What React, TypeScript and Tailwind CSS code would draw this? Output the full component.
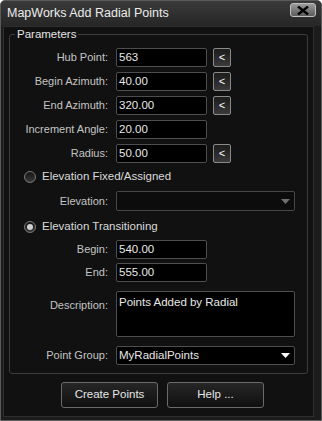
import React from 'react';

const font = "font-['Liberation_Sans',Arial,sans-serif]";

const Label = ({ children }: { children: React.ReactNode }) => (
  <div className="w-[99px] shrink-0 text-right pr-[1px] text-[11px] text-[#c4c4c4] leading-none">{children}</div>
);

const Field = ({ value }: { value: string }) => (
  <div className="w-[91px] h-[19px] ml-[7px] flex items-center pl-[2px] bg-black border border-[#4e4e4e] rounded-[2px] text-[11.5px] text-[#e8e8e8]">
    {value}
  </div>
);

const PickButton = () => (
  <div className="w-[18px] h-[19px] ml-[6px] flex items-center justify-center rounded-[2px] border border-[#8a8a8a] bg-gradient-to-b from-[#1c1c1c] via-[#2a2a2a] to-[#3a3a3a] text-[11px] text-white leading-none">
    &lt;
  </div>
);

const Arrow = ({ color }: { color: string }) => (
  <svg width="9" height="5" viewBox="0 0 9 5" className="mr-[4px]">
    <path d="M0 0 H9 L4.5 5 Z" fill={color} />
  </svg>
);

const Radio = ({ checked, label }: { checked?: boolean; label: string }) => (
  <div className="flex items-center h-[20px] pl-[14px]">
    <div className="w-[12px] h-[12px] rounded-full border border-[#7a7a7a] bg-gradient-to-b from-[#151515] to-[#3a3a3a] flex items-center justify-center">
      {checked && <div className="w-[6px] h-[6px] rounded-full bg-[#d0d0d0]" />}
    </div>
    <span className="ml-[6px] text-[11.5px] text-[#dadada]">{label}</span>
  </div>
);

const FieldRow = ({ label, value, pick, className = '' }: { label: string; value: string; pick?: boolean; className?: string }) => (
  <div className={`flex items-center h-[19px] ${className}`}>
    <Label>{label}</Label>
    <Field value={value} />
    {pick && <PickButton />}
  </div>
);

export default function App() {
  return (
    <div className={`w-[322px] h-[421px] bg-[#1c1c1c] border border-[#5a5a5a] rounded-t-[5px] flex flex-col ${font}`}>
      {/* title bar */}
      <div className="h-[25px] shrink-0 flex items-center justify-between pl-[6px] pr-[5px] bg-gradient-to-b from-[#3a3a3a] to-[#262626] rounded-t-[4px]">
        <span className="text-[12.5px] text-[#ececec]">MapWorks Add Radial Points</span>
        <div className="w-[26px] h-[14px] -mt-[7px] rounded-[3px] border border-[#c0c0c0] bg-gradient-to-b from-[#9a9a9a] to-[#5c5c5c] flex items-center justify-center">
          <svg width="12" height="9" viewBox="0 0 12 9">
            <path d="M1 0.5 L11 8.5 M11 0.5 L1 8.5" stroke="#000" strokeWidth="2.4" />
          </svg>
        </div>
      </div>

      {/* client area */}
      <div className="flex-1 ml-[2px] mr-[7px] mb-[3px] bg-[#111111] border border-[#2e2e2e] flex flex-col px-[5px]">
        <fieldset className="border border-[#3c3c3c] rounded-[3px] pb-[8px]">
          <legend className="ml-[5px] px-[2px] text-[11.5px] leading-[14px] text-[#e4e4e4]">Parameters</legend>
          <FieldRow className="mt-[7px]" label="Hub Point:" value="563" pick />
          <FieldRow className="mt-[5px]" label="Begin Azimuth:" value="40.00" pick />
          <FieldRow className="mt-[5px]" label="End Azimuth:" value="320.00" pick />
          <FieldRow className="mt-[5px]" label="Increment Angle:" value="20.00" />
          <FieldRow className="mt-[5px]" label="Radius:" value="50.00" pick />

          <div className="mt-[4px]">
            <Radio label="Elevation Fixed/Assigned" />
          </div>
          <div className="flex items-center h-[20px] mt-[4px]">
            <Label>Elevation:</Label>
            <div className="w-[179px] h-[20px] ml-[7px] flex items-center justify-end bg-[#0c0c0c] border border-[#464646] rounded-[2px]">
              <Arrow color="#6e6e6e" />
            </div>
          </div>
          <div className="mt-[6px]">
            <Radio checked label="Elevation Transitioning" />
          </div>
          <FieldRow className="mt-[3px]" label="Begin:" value="540.00" />
          <FieldRow className="mt-[4px]" label="End:" value="555.00" />
          <div className="flex mt-[9px]">
            <div className="pt-[9px]">
              <Label>Description:</Label>
            </div>
            <div className="w-[179px] h-[46px] ml-[7px] pl-[2px] pt-[3px] bg-black border border-[#4e4e4e] rounded-[2px] text-[11.5px] text-[#e8e8e8] leading-[14px]">
              Points Added by Radial
            </div>
          </div>
          <div className="flex items-center h-[19px] mt-[9px]">
            <Label>Point Group:</Label>
            <div className="w-[179px] h-[19px] ml-[7px] pl-[2px] flex items-center justify-between bg-black border border-[#4e4e4e] rounded-[2px] text-[11.5px] text-[#e8e8e8]">
              <span>MyRadialPoints</span>
              <Arrow color="#ffffff" />
            </div>
          </div>
        </fieldset>

        <div className="flex justify-center gap-[9px] pl-[8px] mt-[8px]">
          {['Create Points', 'Help ...'].map((t) => (
            <div
              key={t}
              className="w-[97px] h-[26px] flex items-center justify-center rounded-[3px] border border-[#6a6a6a] bg-gradient-to-b from-[#262626] to-[#101010] text-[11.5px] text-[#e6e6e6]"
            >
              {t}
            </div>
          ))}
        </div>
      </div>
    </div>
  );
}
